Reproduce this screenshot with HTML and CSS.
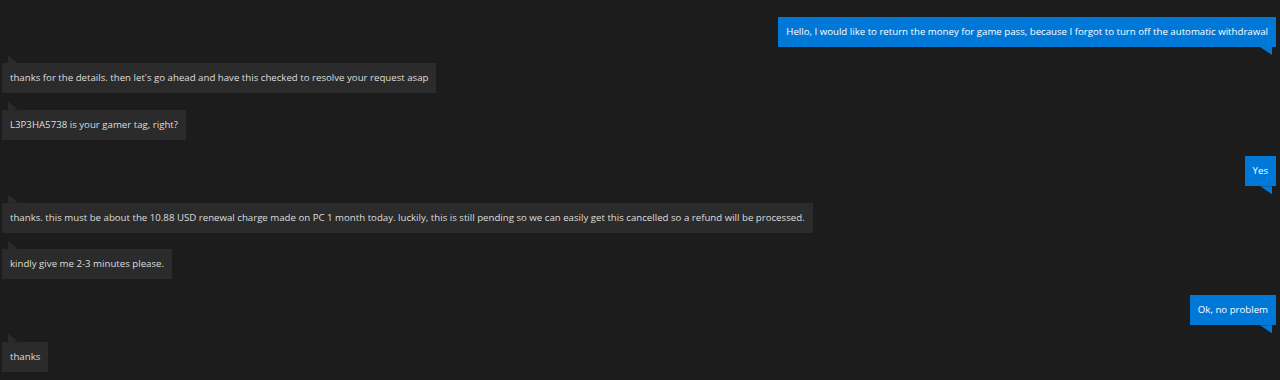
FILE: index.html
```html
<!DOCTYPE html>
<html lang="en">
<head>
    <meta charset="UTF-8">
    <title>Support chat</title>
    <link rel="stylesheet" href="styles.css">
</head>
<body>
    <div class="chat">
        <div class="msg msg-user"><div class="bubble">Hello, I would like to return the money for game pass, because I forgot to turn off the automatic withdrawal</div></div>
        <div class="msg msg-agent"><div class="bubble">thanks for the details. then let's go ahead and have this checked to resolve your request asap</div></div>
        <div class="msg msg-agent"><div class="bubble">L3P3HA5738 is your gamer tag, right?</div></div>
        <div class="msg msg-user"><div class="bubble">Yes</div></div>
        <div class="msg msg-agent"><div class="bubble">thanks. this must be about the 10.88 USD renewal charge made on PC 1 month today. luckily, this is still pending so we can easily get this cancelled so a refund will be processed.</div></div>
        <div class="msg msg-agent"><div class="bubble">kindly give me 2-3 minutes please.</div></div>
        <div class="msg msg-user"><div class="bubble">Ok, no problem</div></div>
        <div class="msg msg-agent"><div class="bubble">thanks</div></div>
    </div>
</body>
</html>
```

FILE: styles.css
```css
body {
    margin: 0;
    background: #1c1c1c;
    font-family: "Open Sans", "Noto Sans", sans-serif;
    font-size: 9.67px;
}

.chat {
    display: flex;
    flex-direction: column;
    gap: 16.4px;
    padding: 17px 4px 0 2px;
}

.msg {
    display: flex;
}

.msg-user {
    justify-content: flex-end;
}

.bubble {
    position: relative;
    padding: 8px;
    line-height: 14px;
    white-space: nowrap;
}

.msg-user .bubble {
    background: #0078d7;
    color: #ffffff;
}

.msg-agent .bubble {
    background: #2b2b2b;
    color: #dedede;
}

/* little speech tails */
.bubble::after {
    content: "";
    position: absolute;
}

.msg-user .bubble::after {
    right: 4px;
    bottom: -8px;
    width: 12px;
    height: 8px;
    background: #0078d7;
    clip-path: polygon(0 0, 100% 0, 100% 100%);
}

.msg-agent .bubble::after {
    left: 6px;
    top: -8px;
    width: 10px;
    height: 8px;
    background: #2b2b2b;
    clip-path: polygon(0 0, 0 100%, 100% 100%);
}
```
